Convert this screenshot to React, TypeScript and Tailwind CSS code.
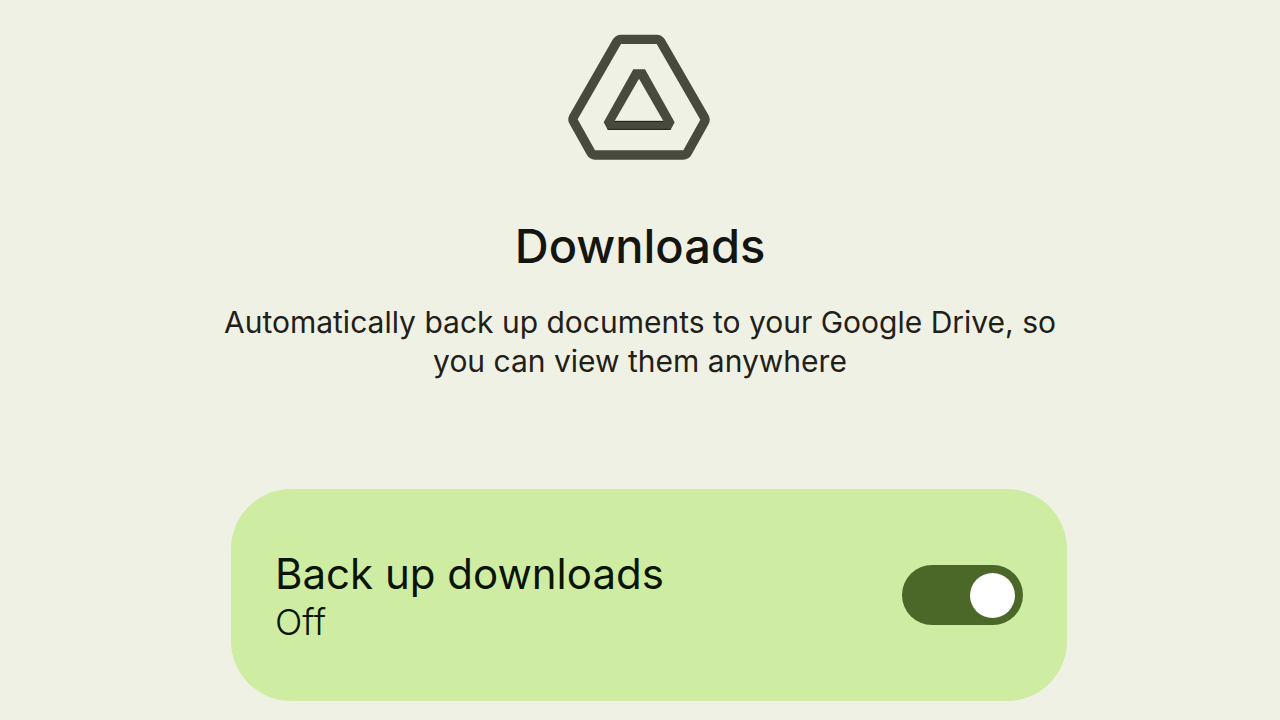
import { useState } from "react";

function DriveIcon() {
  return (
    <svg aria-hidden="true" viewBox="39 42 432 378" className="h-[126px] w-36">
      <path
        d="M173.7 58A28 28 0 0 1 198 44H305A28 28 0 0 1 329.3 58L460.3 285A28 28 0 0 1 460.5 312.6L409.5 404.6A28 28 0 0 1 385 419H120A28 28 0 0 1 95.5 404.6L43.5 311.6A28 28 0 0 1 43.7 284ZM198 72L68 298L120 391H385L436 299L305 72Z"
        fill="#484a3e"
        fillRule="evenodd"
      />
      <path
        d="M235 148H270L359 307L347 329H158L146 307ZM252 176L179 303H325Z"
        fill="#484a3e"
        fillRule="evenodd"
      />
      <path d="M179 304H325M158 328H347" stroke="#1c1d16" strokeWidth="3" />
    </svg>
  );
}

export default function App() {
  const [enabled, setEnabled] = useState(true);

  return (
    <main className="flex min-h-screen flex-col items-center bg-[#f0f1e5] pt-[34px] pb-[18px] font-['Inter',sans-serif] text-[#14150f]">
      <DriveIcon />
      <h1 className="mt-[58px] text-[47px] leading-[56px] font-medium">Downloads</h1>
      <p className="mt-[29px] max-w-[860px] text-center text-[30px] leading-[39px] text-[#1f2018]">
        Automatically back up documents to your Google Drive, so you can view them anywhere
      </p>
      <section className="mt-[108px] flex w-full justify-center pl-[18px]">
        <div className="flex min-h-[212px] w-full max-w-[836px] items-center justify-between rounded-[60px] bg-[#ceeda3] px-11">
          <label htmlFor="backup" className="flex flex-col pt-[2px] text-[#0b1402]">
            <span className="text-[42px] leading-[52px]">Back up downloads</span>
            <span className="text-[36px] leading-[44px] font-light">Off</span>
          </label>
          <input
            id="backup"
            type="checkbox"
            role="switch"
            checked={enabled}
            onChange={(e) => setEnabled(e.target.checked)}
            className="flex h-[60px] w-[121px] shrink-0 cursor-pointer appearance-none items-center rounded-full bg-[#7d8570] px-2 before:size-[45px] before:rounded-full before:bg-white checked:justify-end checked:bg-[#4c6829]"
          />
        </div>
      </section>
    </main>
  );
}
